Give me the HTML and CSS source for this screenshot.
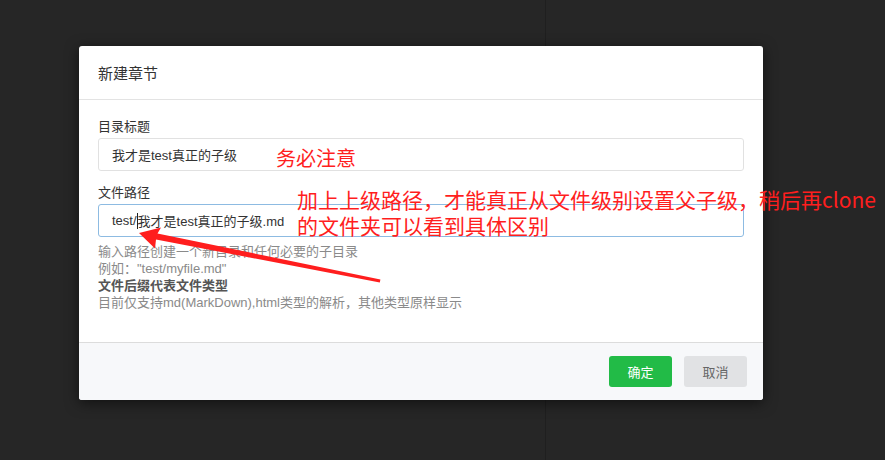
FILE: index.html
```html
<!DOCTYPE html>
<html lang="zh-CN">
<head>
<meta charset="utf-8">
<title>新建章节</title>
<link rel="stylesheet" href="styles.css">
</head>
<body>
<div class="page">
  <div class="modal">
    <div class="modal-header">新建章节</div>
    <div class="modal-body">
      <div class="label">目录标题</div>
      <div class="input">我才是test真正的子级</div>
      <div class="label label-second">文件路径</div>
      <div class="input input-focus">test/<span class="caret"></span>我才是test真正的子级.md</div>
      <div class="help">
        <div>输入路径创建一个新目录和任何必要的子目录</div>
        <div>例如："test/myfile.md"</div>
        <div class="help-strong">文件后缀代表文件类型</div>
        <div>目前仅支持md(MarkDown),html类型的解析，其他类型原样显示</div>
      </div>
    </div>
    <div class="modal-footer">
      <button class="btn btn-ok">确定</button>
      <button class="btn btn-cancel">取消</button>
    </div>
  </div>

  <div class="note note-1">务必注意</div>
  <div class="note note-2">加上上级路径，才能真正从文件级别设置父子级，稍后再clone<br>的文件夹可以看到具体区别</div>
  <svg class="arrow" width="885" height="460" viewBox="0 0 885 460">
    <polygon points="139,233 161,227.5 157.5,233.4 380.4,279.6 379.8,282.6 156,239.4 155,248.5" fill="#ff1e1e"/>
  </svg>
</div>
</body>
</html>
```

FILE: styles.css
```css
* { box-sizing: border-box; }
html, body { margin: 0; padding: 0; }
body {
  width: 885px;
  height: 460px;
  overflow: hidden;
  background: #262626;
  background-image: linear-gradient(to right, transparent 545px, #1f1f1f 545px, #1f1f1f 546px, transparent 546px);
  font-family: "Liberation Sans", "Noto Sans CJK SC", sans-serif;
}
.page {
  position: relative;
  width: 885px;
  height: 460px;
  padding: 46px 0 0 79px;
}
.modal {
  width: 684px;
  background: #fff;
  border-radius: 3px;
  box-shadow: 0 3px 14px rgba(0, 0, 0, 0.55);
  overflow: hidden;
}
.modal-header {
  height: 54px;
  display: flex;
  align-items: center;
  padding: 0 19px 1px;
  font-size: 15px;
  color: #333;
  border-bottom: 1px solid #e3e3e3;
}
.modal-body {
  padding: 18px 19px 31px;
}
.label {
  font-size: 13px;
  line-height: 18px;
  color: #333;
  margin-bottom: 2px;
}
.label-second { margin-top: 13px; }
.input {
  height: 33px;
  border: 1px solid #e1e1e1;
  border-radius: 3px;
  padding: 0 13px;
  display: flex;
  align-items: center;
  font-size: 13px;
  color: #333;
}
.input-focus {
  border-color: #8dbbe2;
}
.caret {
  display: inline-block;
  width: 1px;
  height: 16px;
  background: #222;
}
.help {
  margin-top: 6px;
  font-size: 13px;
  line-height: 17px;
  color: #8a8a8a;
}
.help-strong {
  font-weight: bold;
  color: #555;
}
.modal-footer {
  border-top: 1px solid #dcdcdc;
  background: #f7f8fa;
  padding: 13px 16px 13px;
  display: flex;
  justify-content: flex-end;
  gap: 12px;
}
.btn {
  width: 63px;
  height: 31px;
  border: none;
  border-radius: 3px;
  font-family: "Liberation Sans", "Noto Sans CJK SC", sans-serif;
  font-size: 13px;
  padding: 0;
}
.btn-ok {
  background: #22bb47;
  color: #fff;
}
.btn-cancel {
  background: #e1e2e4;
  color: #666;
}
.note {
  position: absolute;
  color: #ff1e1e;
  white-space: nowrap;
  font-family: "Noto Sans CJK SC", sans-serif;
}
.note-1 {
  left: 276px;
  top: 145px;
  font-size: 20px;
  line-height: 26px;
}
.note-2 {
  left: 297px;
  top: 186px;
  font-size: 21px;
  line-height: 26px;
}
.arrow {
  position: absolute;
  left: 0;
  top: 0;
}
```
